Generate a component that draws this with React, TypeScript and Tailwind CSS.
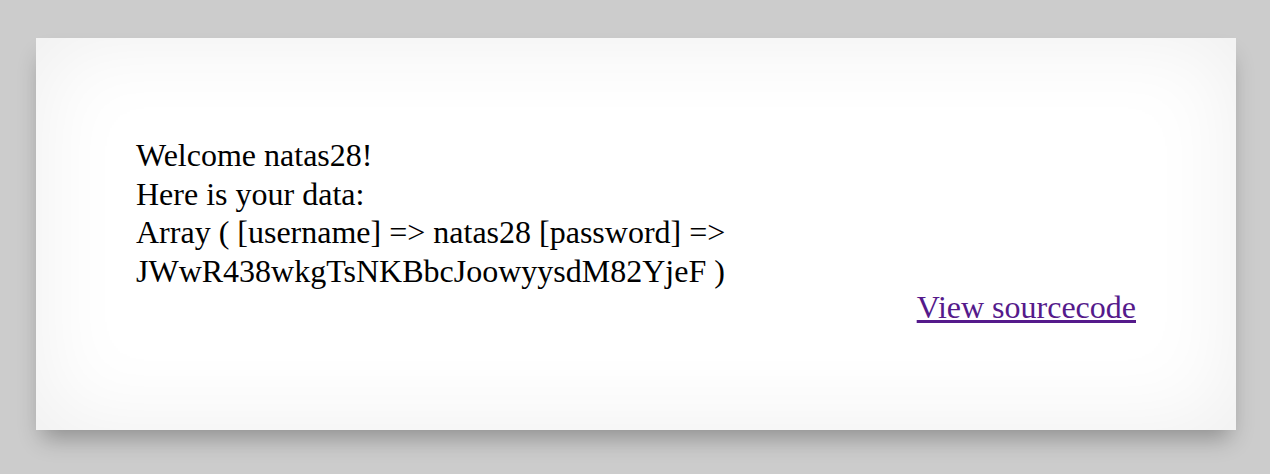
export default function App() {
  return (
    <div className="min-h-[474px] w-full bg-[#cccccc] px-[36px] pt-[38px] font-['Liberation_Serif',_'Times_New_Roman',_serif]">
      <div className="h-[392px] w-[1200px] bg-white px-[100px] pt-[98px] text-[32px] leading-[38.6px] text-black shadow-[inset_0_0_90px_rgba(0,0,0,0.07),0_14px_22px_-6px_rgba(0,0,0,0.3)]">
        <div>
          Welcome natas28!
          <br />
          Here is your data:
          <br />
          Array ( [username] =&gt; natas28 [password] =&gt; JWwR438wkgTsNKBbcJoowyysdM82YjeF )
        </div>
        <div className="text-right leading-[35px]">
          <a href="#" className="text-[#551a8b] underline">
            View sourcecode
          </a>
        </div>
      </div>
    </div>
  );
}
